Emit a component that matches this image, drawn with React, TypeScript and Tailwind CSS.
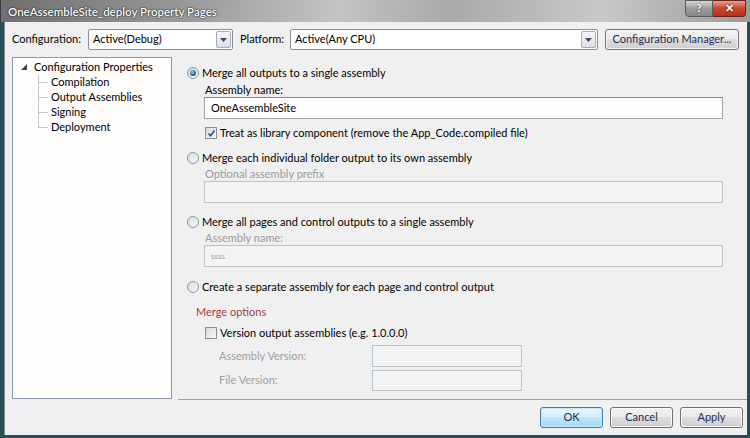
import React from "react";

const font = { fontFamily: '"Lato", "Noto Sans", "Liberation Sans", sans-serif' };

function Combo({ w, text }: { w: string; text: string }) {
  return (
    <div className={`${w} h-[21px] flex border border-[#8e8f8f] bg-white rounded-[2px]`}>
      <div className="flex-1 flex items-center pl-[4px] text-[11px] text-black">{text}</div>
      <div className="w-[15px] my-[1px] mr-[1px] border border-[#a8aeb6] rounded-[2px] bg-[linear-gradient(#f5f6f7,#dde2e7)] flex items-center justify-center">
        <svg width="7" height="4" viewBox="0 0 7 4"><path d="M0 0h7L3.5 4z" fill="#3d4a5c" /></svg>
      </div>
    </div>
  );
}

function Button({ label, w, def }: { label: string; w: string; def?: boolean }) {
  return (
    <div
      className={`${w} h-[21px] flex items-center justify-center rounded-[3px] border text-[11px] text-[#1b2c55] ${
        def
          ? "border-[#3c7fb1] bg-[linear-gradient(#eaf6fd_0%,#d9f0fc_45%,#bee6fd_50%,#a7d9f5_100%)] shadow-[inset_0_0_0_1px_#c6e9fb]"
          : "border-[#707070] bg-[linear-gradient(#f2f2f2_0%,#ebebeb_45%,#dddddd_50%,#cfcfcf_100%)] shadow-[inset_0_0_0_1px_#fbfbfb]"
      }`}
    >
      {label}
    </div>
  );
}

function Radio({ on }: { on?: boolean }) {
  return (
    <div className="w-[12px] h-[12px] rounded-full border border-[#8a97a5] bg-[linear-gradient(135deg,#d9dde2,#f7f8f9)] flex items-center justify-center">
      {on && <div className="w-[6px] h-[6px] rounded-full bg-[radial-gradient(circle_at_40%_35%,#8de0f4,#1c4d6b_70%)]" />}
    </div>
  );
}

function Check({ on }: { on?: boolean }) {
  return (
    <div className="w-[12px] h-[12px] border border-[#8a8f96] bg-[linear-gradient(135deg,#d6dbe0,#f7f8f9)] flex items-center justify-center">
      {on && (
        <svg width="9" height="9" viewBox="0 0 9 9">
          <path d="M1.5 4.5l2 2.3L7.5 1.5" stroke="#314a6a" strokeWidth="1.6" fill="none" />
        </svg>
      )}
    </div>
  );
}

function TextBox({ text, disabled, cls }: { text?: string; disabled?: boolean; cls: string }) {
  return (
    <div
      className={`${cls} flex items-center pl-[6px] border ${
        disabled
          ? "border-[#b9c3cc] bg-[#f4f4f4] text-[#a0a0a0]"
          : "border-[#9aa6b2] border-t-[#7d8a97] bg-[#fffdfd] text-black"
      }`}
    >
      {text}
    </div>
  );
}

export default function App() {
  return (
    <div className="w-[750px] h-[438px] flex flex-col overflow-hidden bg-[#274f57]" style={font}>
      {/* Title bar */}
      <div className="h-[22px] shrink-0 flex items-start bg-[linear-gradient(100deg,#6f6f6f_0%,#9a9a9a_25%,#c4c4c4_45%,#a9a9a9_60%,#c9c9c9_80%,#9a9a9a_100%)] border-l border-[#3a3a3a]">
        <div className="pl-[7px] pt-[3px] text-[11.5px] font-semibold text-white [text-shadow:0_0_2px_#222,0_0_1px_#000]">
          OneAssembleSite_deploy Property Pages
        </div>
        <div className="flex-1" />
        <div className="flex mr-[4px]">
          <div className="w-[28px] h-[17px] rounded-bl-[4px] border border-[#5a5a5a] bg-[linear-gradient(#d8d8d8,#9c9c9c_50%,#8a8a8a)] flex items-center justify-center text-[11px] font-bold text-white [text-shadow:0_0_2px_#333]">
            ?
          </div>
          <div className="w-[33px] h-[17px] rounded-br-[4px] border border-l-0 border-[#6a2020] bg-[linear-gradient(#e8a090,#c8452e_50%,#b83018)] flex items-center justify-center text-[11px] font-bold text-white [text-shadow:0_0_2px_#400]">
            ✕
          </div>
        </div>
      </div>

      {/* Window body */}
      <div className="flex-1 flex flex-col bg-[#f0f0f0] ml-[4px] mr-[3px] mb-[3px] border-l border-[#8b8b8b] text-[11px]">
        {/* Config row */}
        <div className="flex items-center h-[21px] mt-[7px] pl-[7px] text-black">
          <span className="w-[76px]">Configuration:</span>
          <Combo w="w-[145px]" text="Active(Debug)" />
          <span className="ml-[7px] w-[50px]">Platform:</span>
          <Combo w="w-[308px]" text="Active(Any CPU)" />
          <div className="ml-[7px]">
            <Button label="Configuration Manager..." w="w-[134px]" />
          </div>
        </div>

        {/* Main */}
        <div className="flex mt-[7px] h-[343px]">
          <div className="ml-[7px] w-[160px] h-[342px] border border-[#8a98a8] bg-[#fffcfc] text-black pt-[1px]">
            <div className="flex items-center h-[16px] pl-[8px]">
              <svg width="6" height="6" viewBox="0 0 6 6" className="mr-[7px]"><path d="M6 0v6H0z" fill="#444" /></svg>
              Configuration Properties
            </div>
            {["Compilation", "Output Assemblies", "Signing", "Deployment"].map((t, i, a) => (
              <div key={t} className="flex items-center h-[15px] pl-[25px]">
                <div className="relative w-[13px] h-[15px]">
                  <div className={`absolute left-0 top-0 w-0 border-l border-[#c8c8c8] ${i === a.length - 1 ? "h-[8px]" : "h-[15px]"}`} />
                  <div className="absolute left-0 top-[7px] w-[10px] border-t border-[#c8c8c8]" />
                </div>
                {t}
              </div>
            ))}
          </div>

          <div className="flex-1 ml-[6px] flex flex-col border-b border-[#a0a0a0] text-black">
            <div className="pl-[9px] pt-[9px]">
              <div className="flex items-center gap-[3px] h-[14px]">
                <Radio on />
                <span>Merge all outputs to a single assembly</span>
              </div>
              <div className="pl-[18px] mt-[2px] h-[15px] leading-[15px]">Assembly name:</div>
              <div className="pl-[17px] mt-0">
                <TextBox cls="w-[519px] h-[22px]" text="OneAssembleSite" />
              </div>
              <div className="flex items-center gap-[3px] pl-[18px] mt-[7px] h-[14px]">
                <Check on />
                <span>Treat as library component (remove the App_Code.compiled file)</span>
              </div>

              <div className="flex items-center gap-[3px] h-[14px] mt-[11px]">
                <Radio />
                <span>Merge each individual folder output to its own assembly</span>
              </div>
              <div className="pl-[18px] mt-[1px] h-[15px] leading-[15px] text-[#9a9a9a]">Optional assembly prefix</div>
              <div className="pl-[17px] mt-0">
                <TextBox cls="w-[519px] h-[22px]" disabled />
              </div>

              <div className="flex items-center gap-[3px] h-[14px] mt-[12px]">
                <Radio />
                <span>Merge all pages and control outputs to a single assembly</span>
              </div>
              <div className="pl-[18px] mt-[1px] h-[15px] leading-[15px] text-[#9a9a9a]">Assembly name:</div>
              <div className="pl-[17px] mt-0">
                <TextBox cls="w-[519px] h-[22px] text-[8px]" text="ssss" disabled />
              </div>

              <div className="flex items-center gap-[3px] h-[14px] mt-[13px]">
                <Radio />
                <span>Create a separate assembly for each page and control output</span>
              </div>

              <div className="pl-[9px] mt-[10px] h-[15px] leading-[15px] text-[#a0404a]">Merge options</div>
              <div className="flex items-center gap-[3px] pl-[18px] mt-[7px] h-[14px]">
                <Check />
                <span>Version output assemblies (e.g. 1.0.0.0)</span>
              </div>
              <div className="flex items-center pl-[32px] mt-[5px]">
                <span className="w-[153px] text-[#a0a0a0]">Assembly Version:</span>
                <TextBox cls="w-[150px] h-[22px]" disabled />
              </div>
              <div className="flex items-center pl-[32px] mt-[3px]">
                <span className="w-[153px] text-[#a0a0a0]">File Version:</span>
                <TextBox cls="w-[150px] h-[21px]" disabled />
              </div>
            </div>
          </div>
        </div>

        {/* Footer */}
        <div className="flex justify-end gap-[7px] pr-[4px] mt-[7px]">
          <Button label="OK" w="w-[63px]" def />
          <Button label="Cancel" w="w-[63px]" />
          <Button label="Apply" w="w-[63px]" />
        </div>
      </div>
    </div>
  );
}
